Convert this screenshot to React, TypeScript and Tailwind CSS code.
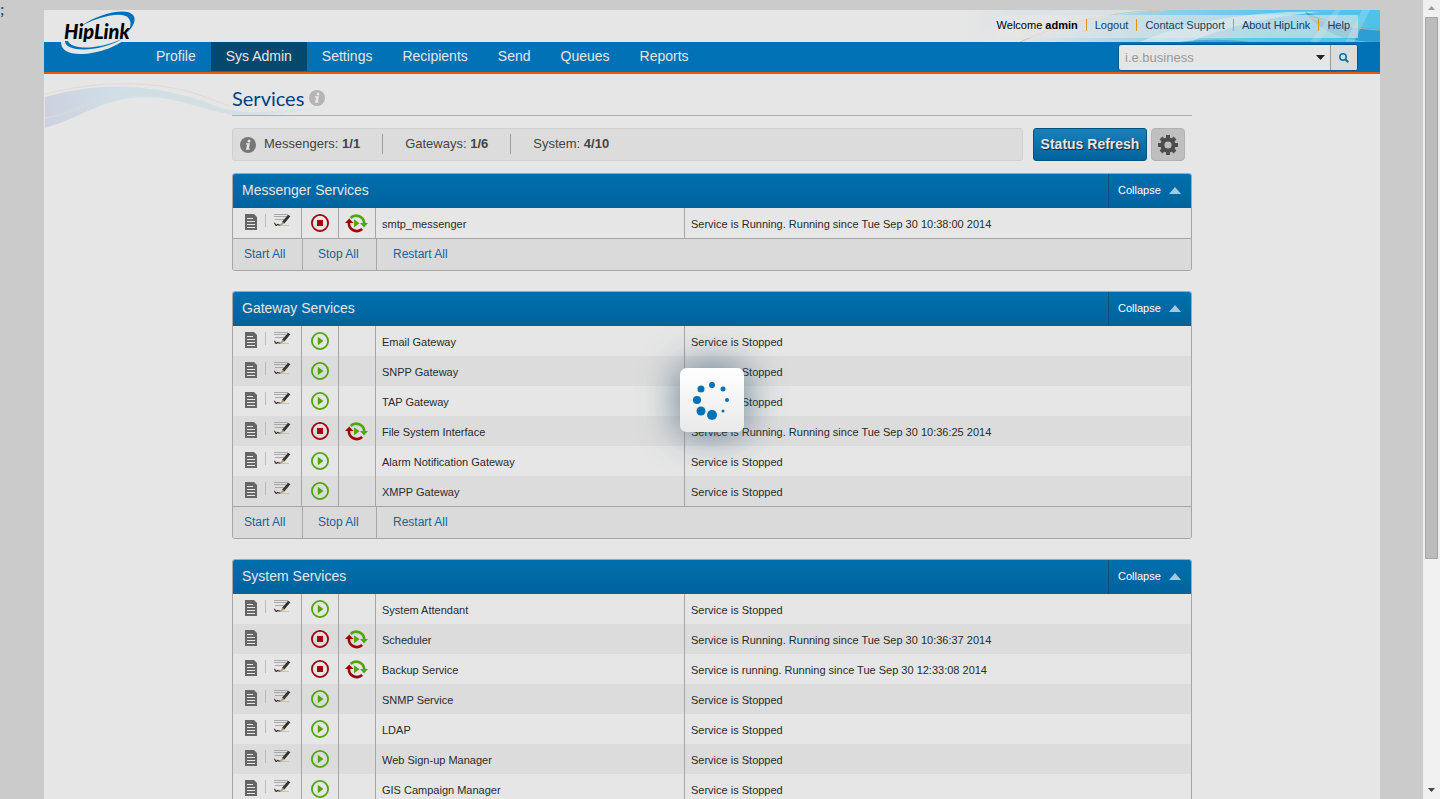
import React from 'react';

type Service = { name: string; status: string; running?: boolean; noEdit?: boolean };

const STOPPED = 'Service is Stopped';

const messengers: Service[] = [
  { name: 'smtp_messenger', status: 'Service is Running. Running since Tue Sep 30 10:38:00 2014', running: true },
];

const gateways: Service[] = [
  { name: 'Email Gateway', status: STOPPED },
  { name: 'SNPP Gateway', status: STOPPED },
  { name: 'TAP Gateway', status: STOPPED },
  { name: 'File System Interface', status: 'Service is Running. Running since Tue Sep 30 10:36:25 2014', running: true },
  { name: 'Alarm Notification Gateway', status: STOPPED },
  { name: 'XMPP Gateway', status: STOPPED },
];

const system: Service[] = [
  { name: 'System Attendant', status: STOPPED },
  { name: 'Scheduler', status: 'Service is Running. Running since Tue Sep 30 10:36:37 2014', running: true, noEdit: true },
  { name: 'Backup Service', status: 'Service is running. Running since Tue Sep 30 12:33:08 2014', running: true },
  { name: 'SNMP Service', status: STOPPED },
  { name: 'LDAP', status: STOPPED },
  { name: 'Web Sign-up Manager', status: STOPPED },
  { name: 'GIS Campaign Manager', status: STOPPED },
];

function LogIcon() {
  return (
    <svg width="12" height="16" viewBox="0 0 12 16" aria-hidden="true">
      <path d="M0 0h9l3 3v13H0z" fill="#666" />
      <path d="M2 4.500h6M2 7.500h8M2 10.500h8M2 13.500h8" stroke="#e6e6e6" />
    </svg>
  );
}

function EditIcon() {
  return (
    <svg width="17" height="13" viewBox="0 0 17 13" aria-hidden="true">
      <path d="M0 .5h14M0 2.500h12M1 5.500h9" stroke="#a8a8a8" />
      <path d="M6 11.500h9" stroke="#c4c0ba" />
      <path d="M0 9c1.200-.3 1.200 2.500 2.200 2.500s.6-1.400 1.600-1 .8 1 2.700.3" stroke="#333" strokeWidth="1.200" fill="none" />
      <path d="M14 .8l2.400 1.400-6 7.300-2.300-1.800z" fill="#333" />
      <path d="M8.100 7.700l2.300 1.800-3.800 2z" fill="#c08a48" />
    </svg>
  );
}

function PlayIcon() {
  return (
    <svg width="18" height="18" viewBox="0 0 18 18" aria-hidden="true">
      <circle cx="9" cy="9" r="8.100" fill="none" stroke="#4ea60a" strokeWidth="1.800" />
      <path d="M6.800 4.800v8.400L12.400 9z" fill="#4ea60a" />
    </svg>
  );
}

function StopIcon() {
  return (
    <svg width="18" height="18" viewBox="0 0 18 18" aria-hidden="true">
      <circle cx="9" cy="9" r="8.100" fill="none" stroke="#a00005" strokeWidth="1.800" />
      <path d="M6 6h6v6H6z" fill="#a00005" />
    </svg>
  );
}

function RestartIcon() {
  return (
    <svg width="24" height="19" viewBox="0 0 24 19" aria-hidden="true">
      <path d="M5.600 4A8 8 0 0 1 19.200 9.500" fill="none" stroke="#4ea60a" strokeWidth="2.600" />
      <path d="M15 9h8l-4 4.500z" fill="#4ea60a" />
      <path d="M17.200 15A8 8 0 0 1 3.900 8.500" fill="none" stroke="#a00005" strokeWidth="2.600" />
      <path d="M0 9h8.500L4.200 4.500z" fill="#a00005" />
      <path d="M9 5.300v8L14.500 9.300z" fill="#4ea60a" />
    </svg>
  );
}

function InfoIcon({ size, color }: { size: number; color: string }) {
  return (
    <svg width={size} height={size} viewBox="0 0 16 16" aria-hidden="true">
      <circle cx="8" cy="8" r="8" fill={color} />
      <circle cx="9" cy="3.900" r="1.500" fill="#e6e6e6" />
      <path d="M6 6.300h4L8.800 11.500h1.100L9.500 12.800H5.900L7.200 7.600H5.700z" fill="#e6e6e6" />
    </svg>
  );
}

function Logo() {
  return (
    <svg width="80" height="46" viewBox="0 0 80 46" role="img" aria-label="HipLink">
      <path d="M1 32C1 40 8 44 20 44 38 44 60 36 70 25V20H10z" fill="#e6e6e6" />
      <path d="M22 15.500C38 4 66-3 73 5c4 5 0 12-6 18 4-6 5-11 1-15.500C62 1.500 40 6 22 15.500z" fill="#0071b4" />
      <path d="M5 31c0 12 36 11 57-2C38 40 11 40 8 31z" fill="#0071b4" />
      <text x="4" y="29" fontFamily="Lato, sans-serif" fontWeight="900" fontStyle="italic" fontSize="20" fill="#000">HipLink</text>
    </svg>
  );
}

function HeaderArt() {
  return (
    <svg className="absolute inset-y-0 right-0 h-8 w-[420px]" viewBox="0 0 420 32" preserveAspectRatio="none" aria-hidden="true">
      <defs>
        <linearGradient id="sky" x1="0" x2="1">
          <stop offset="0" stopColor="#e6e6e6" />
          <stop offset=".2" stopColor="#d8e2e6" />
          <stop offset=".5" stopColor="#92cfe6" />
          <stop offset=".75" stopColor="#5cc4e8" />
          <stop offset="1" stopColor="#4fc2e8" />
        </linearGradient>
      </defs>
      <path d="M0 0h420v32H0z" fill="url(#sky)" />
      <path d="M60 32C130 6 180 0 220 0H100C60 6 20 20 0 32z" fill="#e6e6e6" opacity=".7" />
      <path d="M180 32c40-18 110-32 180-30-50 4-100 16-130 30z" fill="#d5edf4" opacity=".7" />
      <path d="M345 2c20 8 40 16 75 17v13c-40 0-60-12-75-30z" fill="#2494cf" opacity=".8" />
      <path d="M350 32L375 0h6l-22 32zM385 32L402 0h8l-16 32z" fill="#8fd8ee" opacity=".5" />
      <path d="M220 32c20-3 50-3 70 0z" fill="#2494cf" opacity=".6" />
      <path d="M60 32C100 14 150 2 200 0M350 8c30 6 45 11 70 12" fill="none" stroke="#d9b99a" opacity=".8" />
    </svg>
  );
}

function WaveArt() {
  return (
    <svg className="absolute top-2 left-px" width="290" height="48" viewBox="0 0 290 48" aria-hidden="true">
      <defs>
        <linearGradient id="wave" x1="0" x2="1">
          <stop offset="0" stopColor="#cdd1df" />
          <stop offset=".25" stopColor="#cfdfe7" />
          <stop offset=".7" stopColor="#d2e0e6" />
          <stop offset="1" stopColor="#e2e5e6" />
        </linearGradient>
      </defs>
      <path d="M0 15C30 7 60 3 85 5c25 1 55 8 70 13 20 8 30 12 50 12 30 0 50-4 80-5-40 6-75 10-100 7-30-4-50-17-85-17C60 15 35 36 0 46z" fill="url(#wave)" />
      <path d="M0 36C35 30 55 12 95 11s65 13 90 21" fill="none" stroke="#dcdad8" />
      <path d="M0 12C40 2 80-1 115 4s40 10 70 20" fill="none" stroke="#e2dad4" />
    </svg>
  );
}

function ServicePanel({ title, services, footer = true }: { title: string; services: Service[]; footer?: boolean }) {
  return (
    <section className="mb-5 overflow-hidden rounded-[3px] border border-[#a6a6a6]">
      <header className="flex h-[34px] items-stretch bg-gradient-to-b from-[#006fad] to-[#00639d] text-[#e6e6e6]">
        <h2 className="flex-1 pl-[9px] text-sm leading-8">{title}</h2>
        <button type="button" className="flex w-[83px] items-center gap-2 border-l border-[#00517f] pb-[2px] pl-[9px] text-[11px] text-white">
          Collapse
          <svg width="12" height="7" viewBox="0 0 12 7" aria-hidden="true">
            <path d="M6 0l6 7H0z" fill="#a6c8dc" />
          </svg>
        </button>
      </header>
      <table className="w-full table-fixed border-separate border-spacing-0 text-[11px] text-[#2b2b2b]">
        <colgroup>
          <col className="w-[69px]" />
          <col className="w-[37px]" />
          <col className="w-[37px]" />
          <col className="w-[309px]" />
          <col />
        </colgroup>
        <tbody>
          {services.map((s) => (
            <tr key={s.name} className="h-[30px] even:bg-[#dcdcdc]">
              <td className="border-r border-[#a6a6a6] p-0">
                <div className="flex h-[30px] items-start pt-[6px] pl-3">
                  <button type="button" aria-label={'View log of ' + s.name}><LogIcon /></button>
                  {!s.noEdit && (
                    <button type="button" aria-label={'Edit ' + s.name} className="ml-2 flex border-l border-[#bbb] pl-2"><EditIcon /></button>
                  )}
                </div>
              </td>
              <td className="border-r border-[#a6a6a6] p-0">
                <button type="button" aria-label={(s.running ? 'Stop ' : 'Start ') + s.name} className="mx-auto block">
                  {s.running ? <StopIcon /> : <PlayIcon />}
                </button>
              </td>
              <td className="border-r border-[#a6a6a6] p-0">
                {s.running && (
                  <button type="button" aria-label={'Restart ' + s.name} className="mx-auto block"><RestartIcon /></button>
                )}
              </td>
              <td className="border-r border-[#a6a6a6] px-[6px] pt-[2px] pb-0">{s.name}</td>
              <td className="px-[6px] pt-[2px] pb-0">{s.status}</td>
            </tr>
          ))}
        </tbody>
      </table>
      {footer && (
        <footer className="flex h-8 border-t border-[#a6a6a6] bg-[#dadada] text-xs text-[#14639b]">
          <button type="button" className="w-[70px] border-r border-[#a6a6a6] pb-[2px] pl-[11px] text-left">Start All</button>
          <button type="button" className="w-[74px] border-r border-[#a6a6a6] pb-[2px] pl-[15px] text-left">Stop All</button>
          <button type="button" className="pb-[2px] pl-4 text-left">Restart All</button>
        </footer>
      )}
    </section>
  );
}

const dots = [
  [32, 17, 3], [43, 21, 2.5], [47, 32, 2], [43, 43, 1.5], [32, 47, 5], [21, 43, 4.5], [17, 32, 4], [21, 21, 3.5],
];

const navItems = ['Profile', 'Sys Admin', 'Settings', 'Recipients', 'Send', 'Queues', 'Reports'];
const links = ['Logout', 'Contact Support', 'About HipLink', 'Help'];

export default function App() {
  return (
    <div className="flex h-screen overflow-hidden bg-[#cbcbcb] font-['Liberation_Sans',Arial,sans-serif]">
      <div className="relative min-w-0 flex-1 overflow-hidden">
        <span className="absolute top-0 left-0 font-['Liberation_Serif',serif] text-base leading-5 text-[#123a6b]">;</span>
        <div className="mt-[10px] mr-[43px] ml-11 bg-[#e6e6e6]">
          <header className="relative">
            <div className="relative flex h-8 items-center justify-end pr-[22px]">
              <HeaderArt />
              <div className="relative flex h-[23px] items-center bg-[#e6e6e6]/60 pr-2 pb-[2px] text-[11px] text-black">
                <span>Welcome <b>admin</b></span>
                {links.map((l) => (
                  <React.Fragment key={l}>
                    <span className="mx-2 h-3 w-px bg-[#e8930c]" />
                    <a href="#" className="text-[#16405f]">{l}</a>
                  </React.Fragment>
                ))}
              </div>
            </div>
            <div className="flex h-8 items-stretch border-b-2 border-[#e65c00] bg-[#0071b4] pl-[97px]">
              <nav className="flex pb-px">
                {navItems.map((n) => (
                  <a
                    key={n}
                    href="#"
                    className={n === 'Sys Admin' ? 'bg-[#05486e] px-[15px] text-sm leading-7 text-[#e6e6e6]' : 'px-[15px] text-sm leading-7 text-[#e6e6e6]'}
                  >
                    {n}
                  </a>
                ))}
              </nav>
              <form className="mt-[2px] mr-[22px] mb-px ml-auto flex w-60 overflow-hidden rounded-[3px] border border-[#00568c] bg-[#e6e6e6]">
                <input aria-label="Search" placeholder="i.e.business" className="min-w-0 flex-1 px-[6px] text-[13px] outline-none placeholder:text-[#999]" />
                <button type="button" aria-label="Search options" className="px-[5px]">
                  <svg width="9" height="5" viewBox="0 0 9 5" aria-hidden="true"><path d="M0 0h9L4.500 5z" fill="#222" /></svg>
                </button>
                <button type="submit" aria-label="Search" className="flex w-[27px] items-center justify-center border-l border-[#999] bg-[#dcdcdc]">
                  <svg width="10" height="10" viewBox="0 0 10 10" aria-hidden="true">
                    <circle cx="4" cy="4" r="3.200" fill="none" stroke="#0071b4" strokeWidth="1.500" />
                    <path d="M6 6l3.300 3.300" stroke="#0071b4" strokeWidth="2" />
                  </svg>
                </button>
              </form>
            </div>
            <a href="#" className="absolute top-0 left-4"><Logo /></a>
          </header>
          <main className="relative">
            <WaveArt />
            <div className="relative mx-auto max-w-[960px] pt-2">
              <div className="flex h-[34px] items-center gap-[5px] border-b border-[#b0b0b0] pb-[2px]">
                <h1 className="font-['Lato',sans-serif] text-xl leading-6 text-[#003f87]">Services</h1>
                <InfoIcon size={16} color="#b5b5b5" />
              </div>
              <div className="mt-3 mb-3 flex h-[33px] pr-[7px]">
                <div className="flex flex-1 items-center rounded-[3px] border border-[#d0d0d0] bg-[#dcdcdc] pl-[7px] text-[13px] text-[#444]">
                  <InfoIcon size={16} color="#777" />
                  <div className="flex items-center pb-[2px] pl-2">
                    <span>Messengers: <b>1/1</b></span>
                    <span className="mx-[22px] h-5 w-px bg-[#a0a0a0]" />
                    <span>Gateways: <b>1/6</b></span>
                    <span className="mx-[22px] h-5 w-px bg-[#a0a0a0]" />
                    <span>System: <b>4/10</b></span>
                  </div>
                </div>
                <button type="button" className="ml-[10px] w-[114px] rounded-[3px] border border-[#00517f] bg-gradient-to-b from-[#1a80ba] to-[#00639d] pb-[2px] text-sm font-bold text-[#e6e6e6] [text-shadow:1px_1px_1px_#222]">
                  Status Refresh
                </button>
                <button type="button" aria-label="Settings" className="ml-1 flex w-[34px] items-center justify-center rounded-[4px] border border-[#b2b2b2] bg-[#bfbfbf]">
                  <svg width="20" height="20" viewBox="0 0 20 20" aria-hidden="true">
                    <circle cx="10" cy="10" r="5.600" fill="none" stroke="#4d4d4d" strokeWidth="4" />
                    <path d="M10 0v4M10 16v4M0 10h4M16 10h4M3 3l3 3M14 14l3 3M17 3l-3 3M6 14l-3 3" stroke="#4d4d4d" strokeWidth="4" />
                  </svg>
                </button>
              </div>
              <ServicePanel title="Messenger Services" services={messengers} />
              <ServicePanel title="Gateway Services" services={gateways} />
              <ServicePanel title="System Services" services={system} footer={false} />
            </div>
          </main>
        </div>
        <div className="pointer-events-none absolute inset-0 flex items-center justify-center" role="status" aria-label="Loading">
          <div className="h-16 w-16 rounded-[7px] bg-gradient-to-b from-white to-[#e9e9e9] shadow-[0_0_36px_2px_rgba(40,80,105,0.65)]">
            <svg width="64" height="64" viewBox="0 0 64 64" aria-hidden="true">
              {dots.map(([x, y, r]) => <circle key={x + '-' + y} cx={x} cy={y} r={r} fill="#0071b4" />)}
            </svg>
          </div>
        </div>
      </div>
      <div className="flex w-[17px] flex-col items-center bg-[#f0f0f0]" aria-hidden="true">
        <svg className="my-[6px]" width="7" height="5" viewBox="0 0 7 5"><path d="M3.500 0L7 4H0z" fill="#999" /></svg>
        <div className="h-[542px] w-[13px] border border-[#a6a6a6] bg-[#bcbcbc]" />
        <svg className="mt-auto mb-[7px]" width="7" height="4" viewBox="0 0 7 4"><path d="M0 0h7L3.500 4z" fill="#444" /></svg>
      </div>
    </div>
  );
}
